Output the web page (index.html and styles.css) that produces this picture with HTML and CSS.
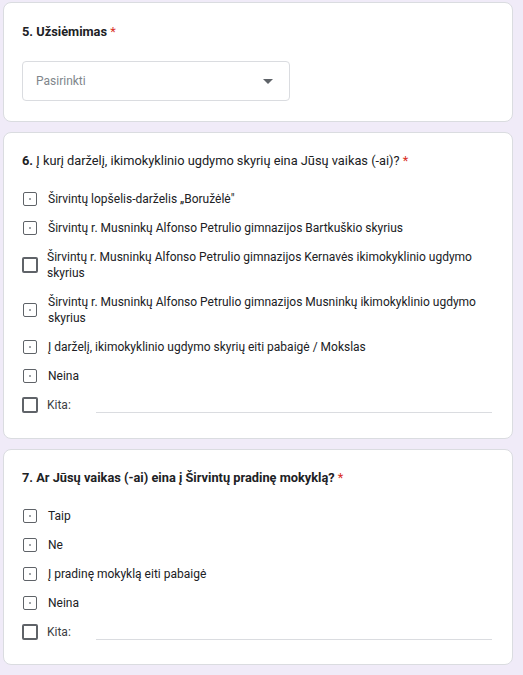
FILE: index.html
```html
<!DOCTYPE html>
<html lang="lt">
<head>
<meta charset="utf-8">
<title>Forma</title>
<link rel="stylesheet" href="styles.css">
</head>
<body>
<main class="form">
  <section class="card card-first">
    <h2 class="q-title q-bold">5. Užsiėmimas <span class="req">*</span></h2>
    <div class="select">
      <span class="select-placeholder">Pasirinkti</span>
      <span class="select-arrow"></span>
    </div>
  </section>

  <section class="card">
    <h2 class="q-title"><b>6.</b> Į kurį darželį, ikimokyklinio ugdymo skyrių eina Jūsų vaikas (-ai)? <span class="req">*</span></h2>
    <ul class="options">
      <li class="opt"><span class="cb"></span><span class="opt-text">Širvintų lopšelis-darželis „Boružėlė"</span></li>
      <li class="opt"><span class="cb"></span><span class="opt-text">Širvintų r. Musninkų Alfonso Petrulio gimnazijos Bartkuškio skyrius</span></li>
      <li class="opt"><span class="cb cb-lg"></span><span class="opt-text">Širvintų r. Musninkų Alfonso Petrulio gimnazijos Kernavės ikimokyklinio ugdymo skyrius</span></li>
      <li class="opt"><span class="cb"></span><span class="opt-text">Širvintų r. Musninkų Alfonso Petrulio gimnazijos Musninkų ikimokyklinio ugdymo skyrius</span></li>
      <li class="opt"><span class="cb"></span><span class="opt-text">Į darželį, ikimokyklinio ugdymo skyrių eiti pabaigė / Mokslas</span></li>
      <li class="opt"><span class="cb"></span><span class="opt-text">Neina</span></li>
      <li class="opt opt-other"><span class="cb cb-lg"></span><span class="opt-text other-label">Kita:</span><span class="other-input"></span></li>
    </ul>
  </section>

  <section class="card">
    <h2 class="q-title q-bold">7. Ar Jūsų vaikas (-ai) eina į Širvintų pradinę mokyklą? <span class="req">*</span></h2>
    <ul class="options">
      <li class="opt"><span class="cb"></span><span class="opt-text">Taip</span></li>
      <li class="opt"><span class="cb"></span><span class="opt-text">Ne</span></li>
      <li class="opt"><span class="cb"></span><span class="opt-text">Į pradinę mokyklą eiti pabaigė</span></li>
      <li class="opt"><span class="cb"></span><span class="opt-text">Neina</span></li>
      <li class="opt opt-other"><span class="cb cb-lg"></span><span class="opt-text other-label">Kita:</span><span class="other-input"></span></li>
    </ul>
  </section>

  <section class="card card-next"></section>
</main>
</body>
</html>
```

FILE: styles.css
```css
* { box-sizing: border-box; }

html, body {
  margin: 0;
  padding: 0;
  background: #f0ebf8;
  height: 675px;
  overflow: hidden;
}

body {
  font-family: Roboto, "Liberation Sans", Arial, sans-serif;
  color: #202124;
}

.form {
  display: flex;
  flex-direction: column;
  gap: 10px;
  padding: 2px 10px 0 3px;
}

.card {
  background: #fff;
  border: 1px solid #dadce0;
  border-radius: 8px;
  padding: 18px 20px 24.5px 18px;
}

.card-first {
  padding-top: 19px;
  padding-bottom: 20px;
}

.card-next {
  min-height: 40px;
}

.q-title {
  margin: 0;
  font-size: 12.8px;
  line-height: 20px;
  font-weight: 400;
  color: #202124;
}

.q-title b,
.q-bold {
  font-weight: 700;
}

.req {
  color: #d93025;
  font-weight: 400;
}

.select {
  margin-top: 19px;
  width: 268px;
  height: 40px;
  border: 1px solid #dadce0;
  border-radius: 4px;
  display: flex;
  align-items: center;
  justify-content: space-between;
  padding: 0 16px 0 13px;
}

.select-placeholder {
  font-size: 12px;
  color: #80868b;
}

.select-arrow {
  width: 0;
  height: 0;
  border-left: 5px solid transparent;
  border-right: 5px solid transparent;
  border-top: 5px solid #5f6368;
}

.options {
  list-style: none;
  margin: 20px 0 0;
  padding: 0;
  display: flex;
  flex-direction: column;
  gap: 13px;
}

.opt {
  display: flex;
  align-items: center;
  font-size: 12px;
  line-height: 16px;
  min-height: 16px;
}

.cb {
  flex: none;
  width: 14px;
  height: 14px;
  margin: 0 11px 0 1px;
  border: 1px solid #5f6368;
  border-radius: 2px;
  position: relative;
}

.cb::after {
  content: "";
  position: absolute;
  left: 5px;
  top: 5px;
  width: 2px;
  height: 2px;
  border-radius: 1px;
  background: #80868b;
}

.cb-lg {
  width: 16px;
  height: 16px;
  margin: 0 9px 0 0;
  border: 2px solid #5f6368;
}

.cb-lg::after {
  display: none;
}

.opt-text {
  color: #202124;
}

.other-label {
  color: #3c4043;
  width: 49px;
  flex: none;
}

.other-input {
  flex: 1;
  align-self: flex-end;
  height: 1px;
  background: #dadce0;
}
```
